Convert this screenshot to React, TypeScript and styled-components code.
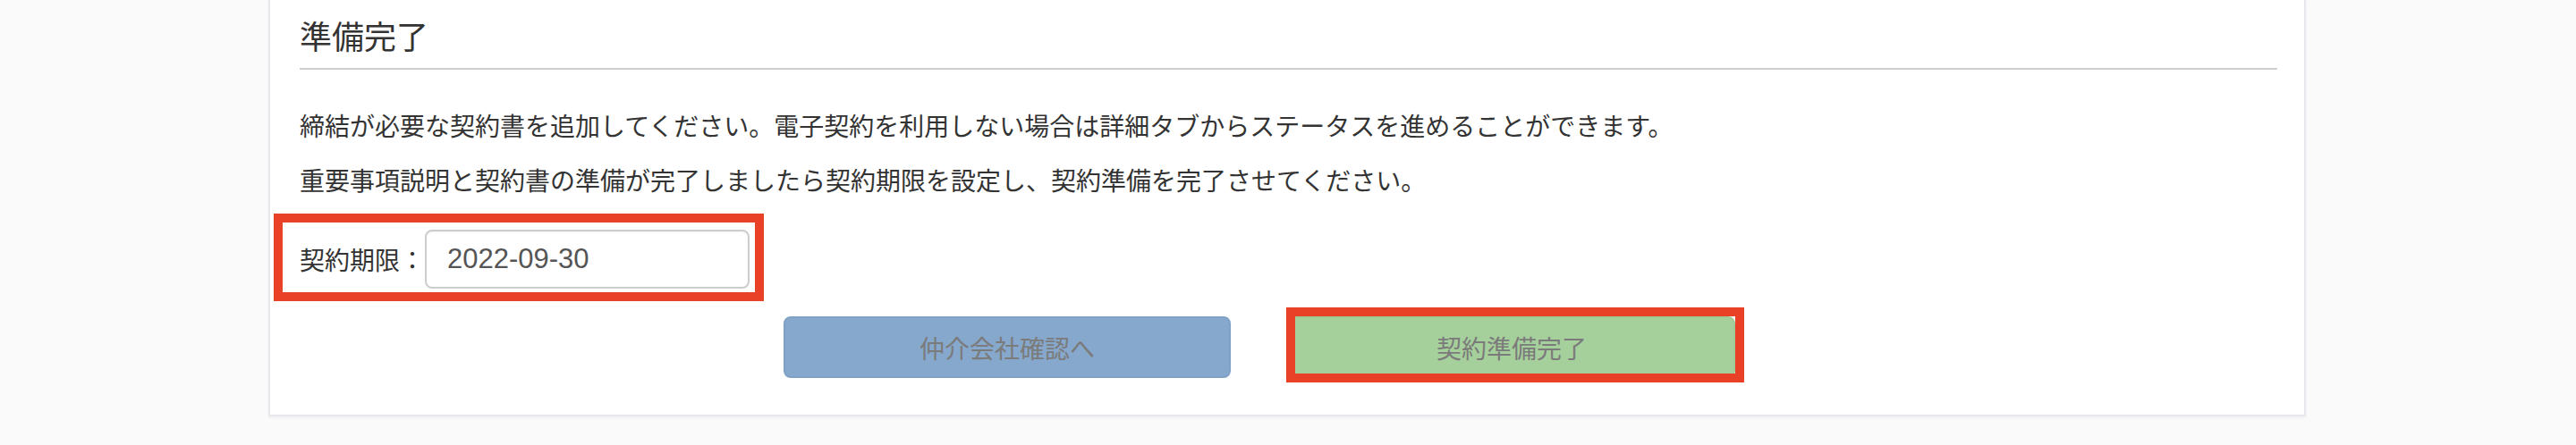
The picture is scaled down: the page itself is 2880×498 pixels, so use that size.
import React from "react";
import styled, { createGlobalStyle } from "styled-components";

const GlobalStyle = createGlobalStyle`
  html, body {
    margin: 0;
    padding: 0;
    background: #fafafa;
  }
  body {
    font-family: "Noto Sans CJK JP", "Noto Sans", sans-serif;
    color: #333;
  }
`;

const Page = styled.div`
  display: flex;
  padding-left: 300px;
  min-height: 498px;
  box-sizing: border-box;
`;

const Panel = styled.section`
  width: 2278px;
  height: 466px;
  box-sizing: border-box;
  background: #fff;
  border: 2px solid #e7e7ee;
  border-top: none;
  box-shadow: 0 2px 3px rgba(0, 0, 0, 0.04);
  padding: 21px 30px 0 33px;
  display: flex;
  flex-direction: column;
`;

const Heading = styled.h2`
  margin: 0;
  font-size: 36px;
  line-height: 36px;
  font-weight: 400;
  color: #333;
  padding-bottom: 19px;
  border-bottom: 2px solid #cfcfcf;
`;

const Paragraph = styled.p<{ $gap: number }>`
  margin: ${(p) => p.$gap}px 0 0 0;
  font-size: 28px;
  line-height: 28px;
  color: #333;
`;

const FormRow = styled.div`
  position: relative;
  align-self: flex-start;
  display: flex;
  align-items: center;
  margin-top: 42px;
`;

const Highlight = styled.div<{ $t: number; $r: number; $b: number; $l: number }>`
  position: absolute;
  top: ${(p) => p.$t}px;
  right: ${(p) => p.$r}px;
  bottom: ${(p) => p.$b}px;
  left: ${(p) => p.$l}px;
  border: 10px solid #e84127;
  pointer-events: none;
`;

const Label = styled.label`
  font-size: 28px;
  line-height: 28px;
  color: #333;
`;

const DateInput = styled.div`
  width: 363px;
  height: 66px;
  box-sizing: border-box;
  border: 2px solid #cdcdcd;
  border-radius: 8px;
  box-shadow: inset 0 1px 2px rgba(0, 0, 0, 0.06);
  padding-left: 23px;
  display: flex;
  align-items: center;
  font-family: "Liberation Sans", Arial, sans-serif;
  font-size: 31px;
  color: #555;
`;

const ButtonRow = styled.div`
  display: flex;
  gap: 64px;
  margin-top: 31px;
  padding-left: 541px;
`;

const ButtonWrap = styled.div`
  position: relative;
`;

const ActionButton = styled.button<{ $bg: string; $border: string }>`
  width: 500px;
  height: 69px;
  box-sizing: border-box;
  border: 2px solid ${(p) => p.$border};
  border-radius: 8px;
  background: ${(p) => p.$bg};
  color: #7b7b7b;
  font-family: "Noto Sans CJK JP", "Noto Sans", sans-serif;
  font-size: 28px;
  line-height: 28px;
  padding: 0;
  cursor: not-allowed;
  display: flex;
  align-items: center;
  justify-content: center;
`;

export default function App() {
  return (
    <>
      <GlobalStyle />
      <Page>
        <Panel>
          <Heading>準備完了</Heading>
          <Paragraph $gap={48}>
            締結が必要な契約書を追加してください。電子契約を利用しない場合は詳細タブからステータスを進めることができます。
          </Paragraph>
          <Paragraph $gap={33}>
            重要事項説明と契約書の準備が完了しましたら契約期限を設定し、契約準備を完了させてください。
          </Paragraph>
          <FormRow>
            <Label>契約期限：</Label>
            <DateInput>2022-09-30</DateInput>
            <Highlight $t={-18} $r={-16} $b={-14} $l={-29} />
          </FormRow>
          <ButtonRow>
            <ButtonWrap>
              <ActionButton $bg="#86a8cc" $border="#80a1c6" disabled>
                仲介会社確認へ
              </ActionButton>
            </ButtonWrap>
            <ButtonWrap>
              <ActionButton $bg="#a6d09b" $border="#a0c995" disabled>
                契約準備完了
              </ActionButton>
              <Highlight $t={-10} $r={-10} $b={-5} $l={-2} />
            </ButtonWrap>
          </ButtonRow>
        </Panel>
      </Page>
    </>
  );
}
